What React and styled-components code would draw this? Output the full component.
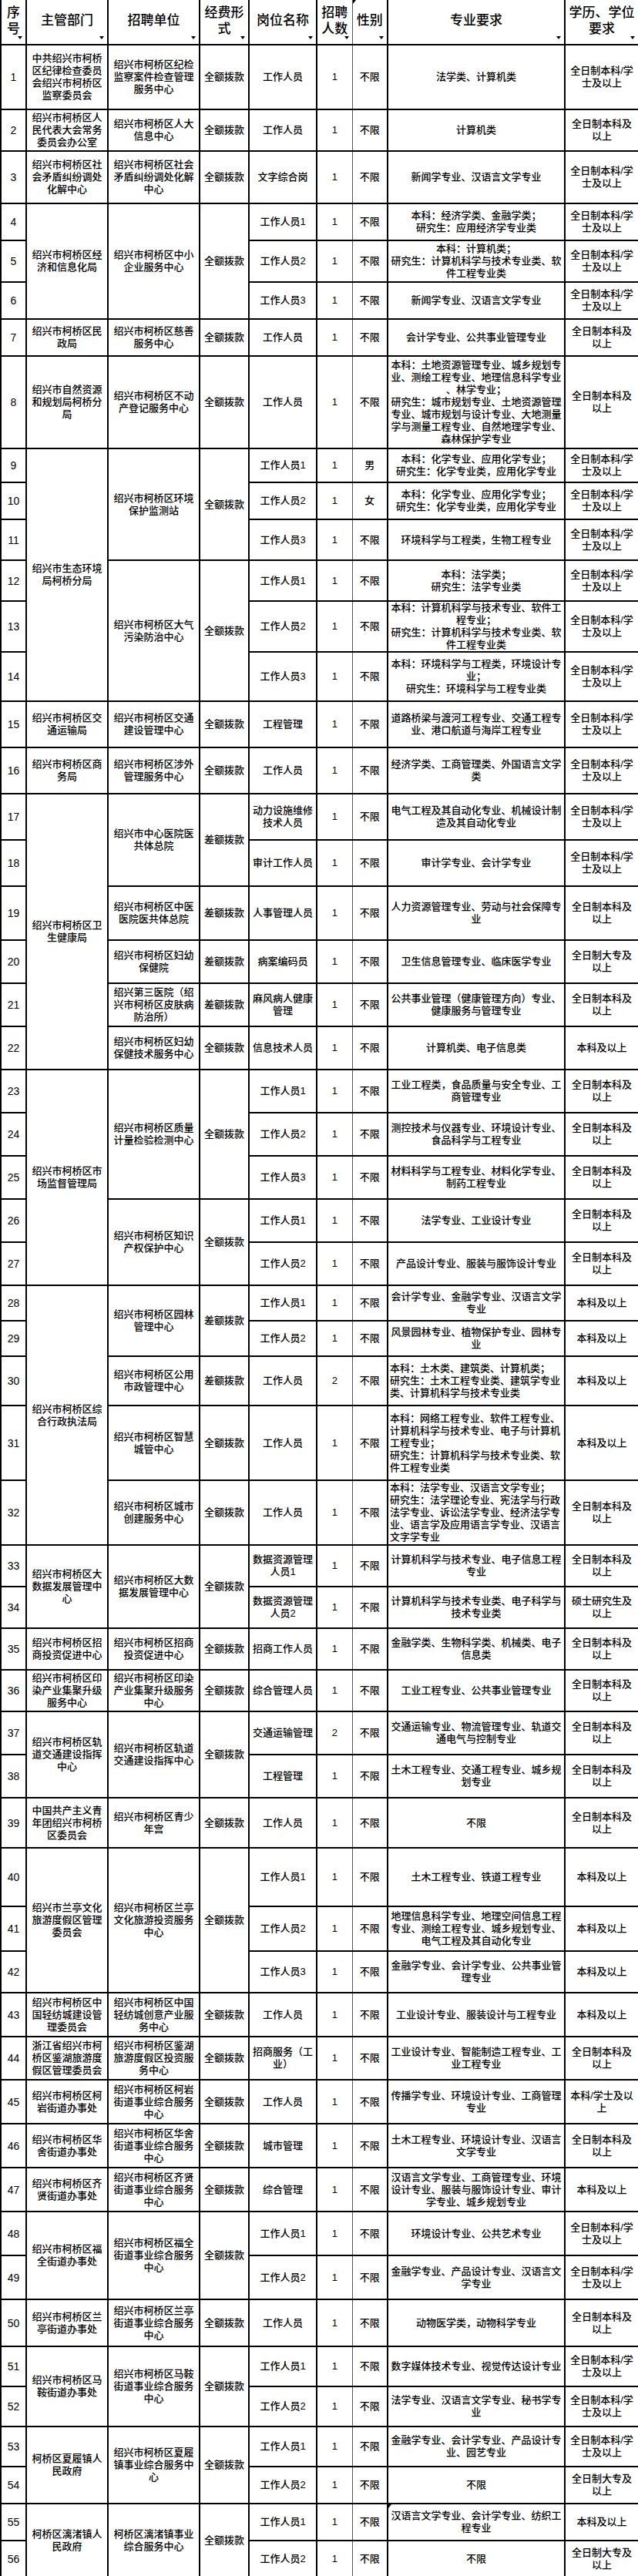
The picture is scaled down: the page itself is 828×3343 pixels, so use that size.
import React from 'react';
import styled, { createGlobalStyle } from 'styled-components';

const GlobalStyle = createGlobalStyle`
  html, body {
    margin: 0;
    padding: 0;
    background: #fff;
  }
`;

const FONT = `"Liberation Sans", "Noto Sans CJK SC", sans-serif`;
const LINE = '2px solid #000';
const THIN = '1px solid #555';

const Sheet = styled.table`
  width: 828px;
  border-collapse: collapse;
  table-layout: fixed;
  font-family: ${FONT};
  color: #000;
`;

const Row = styled.tr`
  height: ${(p) => p.$h}px;
`;

const HeadCell = styled.th`
  position: relative;
  border: ${LINE};
  border-top: none;
  border-left: ${(p) => (p.$thinLeft ? THIN : LINE)};
  border-right: ${(p) => (p.$thinRight ? THIN : LINE)};
  padding: 0 2px 4px;
  font-size: 17px;
  font-weight: 500;
  line-height: 21px;
  text-align: center;
  vertical-align: middle;
  word-break: break-all;
  line-break: anywhere;
`;

const FilterArrow = styled.span`
  position: absolute;
  right: 4px;
  bottom: 6px;
  width: 0;
  height: 0;
  border-left: 3px solid transparent;
  border-right: 3px solid transparent;
  border-top: 4px solid #000;
`;

const CornerMark = styled.span`
  position: absolute;
  top: 0;
  left: 0;
  width: 0;
  height: 0;
  border-top: 5px solid #000;
  border-right: 4px solid transparent;
`;

const Cell = styled.td`
  position: relative;
  border: ${LINE};
  border-left: ${(p) => (p.$thinLeft ? THIN : LINE)};
  border-right: ${(p) => (p.$thinRight ? THIN : LINE)};
  padding: 0 2px;
  font-size: 13px;
  font-weight: 500;
  line-height: 16px;
  text-align: ${(p) => p.$align || 'center'};
  vertical-align: middle;
  white-space: pre-line;
  word-break: break-all;
  line-break: anywhere;
`;

const NumCell = styled(Cell)`
  font-size: 14px;
  font-weight: 400;
  padding: 0;
`;

const Col = styled.col`
  width: ${(p) => p.$w}px;
`;

const cols = [33, 106, 119, 64, 88, 46, 46, 230, 96];

const heads = ['序号', '主管部门', '招聘单位', '经费形式', '岗位名称', '招聘人数', '性别', '专业要求', '学历、学位要求'];

const QE = '全额拨款';
const CE = '差额拨款';
const BX = '全日制本科/学士及以上';
const BJ = '全日制本科及以上';
const BK = '本科及以上';
const DZ = '全日制大专及以上';

// 每行：序号、行高、可合并的单元格 [文字, 行数]、其余字段
const rows = [
  { n: 1, h: 84, dept: ['中共绍兴市柯桥区纪律检查委员会绍兴市柯桥区监察委员会'], unit: ['绍兴市柯桥区纪检监察案件检查管理服务中心'], fund: [QE], post: '工作人员', count: 1, sex: '不限', major: '法学类、计算机类', edu: BX },
  { n: 2, h: 54, dept: ['绍兴市柯桥区人民代表大会常务委员会办公室'], unit: ['绍兴市柯桥区人大信息中心'], fund: [QE], post: '工作人员', count: 1, sex: '不限', major: '计算机类', edu: BJ },
  { n: 3, h: 68, dept: ['绍兴市柯桥区社会矛盾纠纷调处化解中心'], unit: ['绍兴市柯桥区社会矛盾纠纷调处化解中心'], fund: [QE], post: '文字综合岗', count: 1, sex: '不限', major: '新闻学专业、汉语言文学专业', edu: BX },
  { n: 4, h: 48, dept: ['绍兴市柯桥区经济和信息化局', 3], unit: ['绍兴市柯桥区中小企业服务中心', 3], fund: [QE, 3], post: '工作人员1', count: 1, sex: '不限', major: '本科：经济学类、金融学类；\n研究生：应用经济学专业类', edu: BX },
  { n: 5, h: 54, post: '工作人员2', count: 1, sex: '不限', major: '本科：计算机类；\n研究生：计算机科学与技术专业类、软件工程专业类', edu: BX },
  { n: 6, h: 48, post: '工作人员3', count: 1, sex: '不限', major: '新闻学专业、汉语言文学专业', edu: BX },
  { n: 7, h: 48, dept: ['绍兴市柯桥区民政局'], unit: ['绍兴市柯桥区慈善服务中心'], fund: [QE], post: '工作人员', count: 1, sex: '不限', major: '会计学专业、公共事业管理专业', edu: BJ },
  { n: 8, h: 120, dept: ['绍兴市自然资源和规划局柯桥分局'], unit: ['绍兴市柯桥区不动产登记服务中心'], fund: [QE], post: '工作人员', count: 1, sex: '不限', major: '本科：土地资源管理专业、城乡规划专业、测绘工程专业、地理信息科学专业、林学专业；\n研究生：城市规划专业、土地资源管理专业、城市规划与设计专业、大地测量学与测量工程专业、自然地理学专业、森林保护学专业', edu: BJ },
  { n: 9, h: 44, dept: ['绍兴市生态环境局柯桥分局', 6], unit: ['绍兴市柯桥区环境保护监测站', 3], fund: [QE, 3], post: '工作人员1', count: 1, sex: '男', major: '本科：化学专业、应用化学专业；\n研究生：化学专业类，应用化学专业', edu: BX },
  { n: 10, h: 48, post: '工作人员2', count: 1, sex: '女', major: '本科：化学专业、应用化学专业；\n研究生：化学专业类，应用化学专业', edu: BX },
  { n: 11, h: 53, post: '工作人员3', count: 1, sex: '不限', major: '环境科学与工程类，生物工程专业', edu: BX },
  { n: 12, h: 53, unit: ['绍兴市柯桥区大气污染防治中心', 3], fund: [QE, 3], post: '工作人员1', count: 1, sex: '不限', major: '本科：法学类；\n研究生：法学专业类', edu: BX },
  { n: 13, h: 64, post: '工作人员2', count: 1, sex: '不限', major: '本科：计算机科学与技术专业、软件工程专业；\n研究生：计算机科学与技术专业类、软件工程专业类', edu: BX },
  { n: 14, h: 64, post: '工作人员3', count: 1, sex: '不限', major: '本科：环境科学与工程类，环境设计专业；\n研究生：环境科学与工程专业类', edu: BX },
  { n: 15, h: 60, dept: ['绍兴市柯桥区交通运输局'], unit: ['绍兴市柯桥区交通建设管理中心'], fund: [QE], post: '工程管理', count: 1, sex: '不限', major: '道路桥梁与渡河工程专业、交通工程专业、港口航道与海岸工程专业', edu: BX },
  { n: 16, h: 60, dept: ['绍兴市柯桥区商务局'], unit: ['绍兴市柯桥区涉外管理服务中心'], fund: [QE], post: '工作人员', count: 1, sex: '不限', major: '经济学类、工商管理类、外国语言文学类', edu: BX },
  { n: 17, h: 60, dept: ['绍兴市柯桥区卫生健康局', 6], unit: ['绍兴市中心医院医共体总院', 2], fund: [CE, 2], post: '动力设施维修技术人员', count: 1, sex: '不限', major: '电气工程及其自动化专业、机械设计制造及其自动化专业', edu: BX },
  { n: 18, h: 60, post: '审计工作人员', count: 1, sex: '不限', major: '审计学专业、会计学专业', edu: BX },
  { n: 19, h: 70, unit: ['绍兴市柯桥区中医医院医共体总院'], fund: [CE], post: '人事管理人员', count: 1, sex: '不限', major: '人力资源管理专业、劳动与社会保障专业', edu: BJ },
  { n: 20, h: 56, unit: ['绍兴市柯桥区妇幼保健院'], fund: [CE], post: '病案编码员', count: 1, sex: '不限', major: '卫生信息管理专业、临床医学专业', edu: DZ },
  { n: 21, h: 56, unit: ['绍兴第三医院（绍兴市柯桥区皮肤病防治所）'], fund: [CE], post: '麻风病人健康管理', count: 1, sex: '不限', major: '公共事业管理（健康管理方向）专业、健康服务与管理专业', edu: BJ },
  { n: 22, h: 56, unit: ['绍兴市柯桥区妇幼保健技术服务中心'], fund: [QE], post: '信息技术人员', count: 1, sex: '不限', major: '计算机类、电子信息类', edu: '本科及以上' },
  { n: 23, h: 56, dept: ['绍兴市柯桥区市场监督管理局', 5], unit: ['绍兴市柯桥区质量计量检验检测中心', 3], fund: [QE, 3], post: '工作人员1', count: 1, sex: '不限', major: '工业工程类，食品质量与安全专业、工商管理专业', edu: BJ },
  { n: 24, h: 56, post: '工作人员2', count: 1, sex: '不限', major: '测控技术与仪器专业、环境设计专业、食品科学与工程专业', edu: BJ },
  { n: 25, h: 56, post: '工作人员3', count: 1, sex: '不限', major: '材料科学与工程专业、材料化学专业、制药工程专业', edu: BJ },
  { n: 26, h: 56, unit: ['绍兴市柯桥区知识产权保护中心', 2], fund: [QE, 2], post: '工作人员1', count: 1, sex: '不限', major: '法学专业、工业设计专业', edu: BJ },
  { n: 27, h: 56, post: '工作人员2', count: 1, sex: '不限', major: '产品设计专业、服装与服饰设计专业', edu: BJ },
  { n: 28, h: 46, dept: ['绍兴市柯桥区综合行政执法局', 5], unit: ['绍兴市柯桥区园林管理中心', 2], fund: [CE, 2], post: '工作人员1', count: 1, sex: '不限', major: '会计学专业、金融学专业、汉语言文学专业', edu: BK },
  { n: 29, h: 46, post: '工作人员2', count: 1, sex: '不限', major: '风景园林专业、植物保护专业、园林专业', edu: BK },
  { n: 30, h: 64, unit: ['绍兴市柯桥区公用市政管理中心'], fund: [CE], post: '工作人员', count: 2, sex: '不限', major: '本科：土木类、建筑类、计算机类；\n研究生：土木工程专业类、建筑学专业类、计算机科学与技术专业类', left: true, edu: BK },
  { n: 31, h: 97, unit: ['绍兴市柯桥区智慧城管中心'], fund: [QE], post: '工作人员', count: 1, sex: '不限', major: '本科：网络工程专业、软件工程专业、计算机科学与技术专业、电子与计算机工程专业；\n研究生：计算机科学与技术专业类、软件工程专业类', left: true, edu: BK },
  { n: 32, h: 84, unit: ['绍兴市柯桥区城市创建服务中心'], fund: [QE], post: '工作人员', count: 1, sex: '不限', major: '本科：法学专业、汉语言文学专业；\n研究生：法学理论专业、宪法学与行政法学专业、诉讼法学专业、经济法学专业、语言学及应用语言学专业、汉语言文字学专业', left: true, edu: BJ },
  { n: 33, h: 54, dept: ['绍兴市柯桥区大数据发展管理中心', 2], unit: ['绍兴市柯桥区大数据发展管理中心', 2], fund: [QE, 2], post: '数据资源管理人员1', count: 1, sex: '不限', major: '计算机科学与技术专业、电子信息工程专业', edu: BJ },
  { n: 34, h: 54, post: '数据资源管理人员2', count: 1, sex: '不限', major: '计算机科学与技术专业类、电子科学与技术专业类', edu: '硕士研究生及以上' },
  { n: 35, h: 54, dept: ['绍兴市柯桥区招商投资促进中心'], unit: ['绍兴市柯桥区招商投资促进中心'], fund: [QE], post: '招商工作人员', count: 1, sex: '不限', major: '金融学类、生物科学类、机械类、电子信息类', edu: BJ },
  { n: 36, h: 54, dept: ['绍兴市柯桥区印染产业集聚升级服务中心'], unit: ['绍兴市柯桥区印染产业集聚升级服务中心'], fund: [QE], post: '综合管理人员', count: 1, sex: '不限', major: '工业工程专业、公共事业管理专业', edu: BJ },
  { n: 37, h: 56, dept: ['绍兴市柯桥区轨道交通建设指挥中心', 2], unit: ['绍兴市柯桥区轨道交通建设指挥中心', 2], fund: [QE, 2], post: '交通运输管理', count: 2, sex: '不限', major: '交通运输专业、物流管理专业、轨道交通电气与控制专业', edu: BJ },
  { n: 38, h: 56, post: '工程管理', count: 1, sex: '不限', major: '土木工程专业、交通工程专业、城乡规划专业', edu: BJ },
  { n: 39, h: 65, dept: ['中国共产主义青年团绍兴市柯桥区委员会'], unit: ['绍兴市柯桥区青少年宫'], fund: [QE], post: '工作人员', count: 1, sex: '不限', major: '不限', edu: BJ },
  { n: 40, h: 76, dept: ['绍兴市兰亭文化旅游度假区管理委员会', 3], unit: ['绍兴市柯桥区兰亭文化旅游投资服务中心', 3], fund: [QE, 3], post: '工作人员1', count: 1, sex: '不限', major: '土木工程专业、铁道工程专业', edu: BK },
  { n: 41, h: 58, post: '工作人员2', count: 1, sex: '不限', major: '地理信息科学专业、地理空间信息工程专业、测绘工程专业、城乡规划专业、电气工程及其自动化专业', edu: BK },
  { n: 42, h: 54, post: '工作人员3', count: 1, sex: '不限', major: '金融学专业、会计学专业、公共事业管理专业', edu: BK },
  { n: 43, h: 57, dept: ['绍兴市柯桥区中国轻纺城建设管理委员会'], unit: ['绍兴市柯桥区中国轻纺城创意产业服务中心'], fund: [QE], post: '工作人员', count: 1, sex: '不限', major: '工业设计专业、服装设计与工程专业', edu: BK },
  { n: 44, h: 56, dept: ['浙江省绍兴市柯桥区鉴湖旅游度假区管理委员会'], unit: ['绍兴市柯桥区鉴湖旅游度假区投资服务中心'], fund: [QE], post: '招商服务（工业）', count: 1, sex: '不限', major: '工业设计专业、智能制造工程专业、工业工程专业', edu: BJ },
  { n: 45, h: 57, dept: ['绍兴市柯桥区柯岩街道办事处'], unit: ['绍兴市柯桥区柯岩街道事业综合服务中心'], fund: [QE], post: '工作人员', count: 1, sex: '不限', major: '传播学专业、环境设计专业、工商管理专业', edu: '本科/学士及以上' },
  { n: 46, h: 57, dept: ['绍兴市柯桥区华舍街道办事处'], unit: ['绍兴市柯桥区华舍街道事业综合服务中心'], fund: [QE], post: '城市管理', count: 1, sex: '不限', major: '土木工程专业、环境设计专业、汉语言文学专业', edu: BJ },
  { n: 47, h: 57, dept: ['绍兴市柯桥区齐贤街道办事处'], unit: ['绍兴市柯桥区齐贤街道事业综合服务中心'], fund: [QE], post: '综合管理', count: 1, sex: '不限', major: '汉语言文学专业、工商管理专业、环境设计专业、服装与服饰设计专业、审计学专业、城乡规划专业', edu: BK },
  { n: 48, h: 57, dept: ['绍兴市柯桥区福全街道办事处', 2], unit: ['绍兴市柯桥区福全街道事业综合服务中心', 2], fund: [QE, 2], post: '工作人员1', count: 1, sex: '不限', major: '环境设计专业、公共艺术专业', edu: BX },
  { n: 49, h: 57, post: '工作人员2', count: 1, sex: '不限', major: '金融学专业、产品设计专业、汉语言文学专业', edu: BX },
  { n: 50, h: 61, dept: ['绍兴市柯桥区兰亭街道办事处'], unit: ['绍兴市柯桥区兰亭街道事业综合服务中心'], fund: [QE], post: '工作人员', count: 1, sex: '不限', major: '动物医学类，动物科学专业', edu: BJ },
  { n: 51, h: 52, dept: ['绍兴市柯桥区马鞍街道办事处', 2], unit: ['绍兴市柯桥区马鞍街道事业综合服务中心', 2], fund: [QE, 2], post: '工作人员1', count: 1, sex: '不限', major: '数字媒体技术专业、视觉传达设计专业', edu: BX },
  { n: 52, h: 52, post: '工作人员2', count: 1, sex: '不限', major: '法学专业、汉语言文学专业、秘书学专业', edu: BX },
  { n: 53, h: 52, dept: ['柯桥区夏履镇人民政府', 2], unit: ['绍兴市柯桥区夏履镇事业综合服务中心', 2], fund: [QE, 2], post: '工作人员1', count: 1, sex: '不限', major: '金融学专业、会计学专业、产品设计专业、园艺专业', edu: BX },
  { n: 54, h: 48, post: '工作人员2', count: 1, sex: '不限', major: '不限', edu: DZ },
  { n: 55, h: 48, dept: ['柯桥区漓渚镇人民政府', 2], unit: ['柯桥区漓渚镇事业综合服务中心', 2], fund: [QE, 2], post: '工作人员1', count: 1, sex: '不限', major: '汉语言文学专业、会计学专业、纺织工程专业', mark: true, edu: BK },
  { n: 56, h: 48, post: '工作人员2', count: 1, sex: '不限', major: '不限', edu: DZ },
];

const Spanned = ({ cell }) =>
  cell ? <Cell rowSpan={cell[1] || 1}>{cell[0]}</Cell> : null;

const App = () => (
  <>
    <GlobalStyle />
    <Sheet>
      <colgroup>
        {cols.map((w, i) => (
          <Col key={i} $w={w} />
        ))}
      </colgroup>
      <thead>
        <Row $h={58}>
          {heads.map((t, i) => (
            <HeadCell key={t} $thinRight={i === 5} $thinLeft={i === 6}>
              {i === 6 && <CornerMark />}
              {t}
              <FilterArrow />
            </HeadCell>
          ))}
        </Row>
      </thead>
      <tbody>
        {rows.map((r) => (
          <Row key={r.n} $h={r.h}>
            <NumCell>{r.n}</NumCell>
            <Spanned cell={r.dept} />
            <Spanned cell={r.unit} />
            <Spanned cell={r.fund} />
            <Cell>{r.post}</Cell>
            <Cell $thinRight>{r.count}</Cell>
            <Cell $thinLeft>{r.sex}</Cell>
            <Cell $align={r.left ? 'left' : 'center'}>
              {r.mark && <CornerMark />}
              {r.major}
            </Cell>
            <Cell>{r.edu}</Cell>
          </Row>
        ))}
      </tbody>
    </Sheet>
  </>
);

export default App;
